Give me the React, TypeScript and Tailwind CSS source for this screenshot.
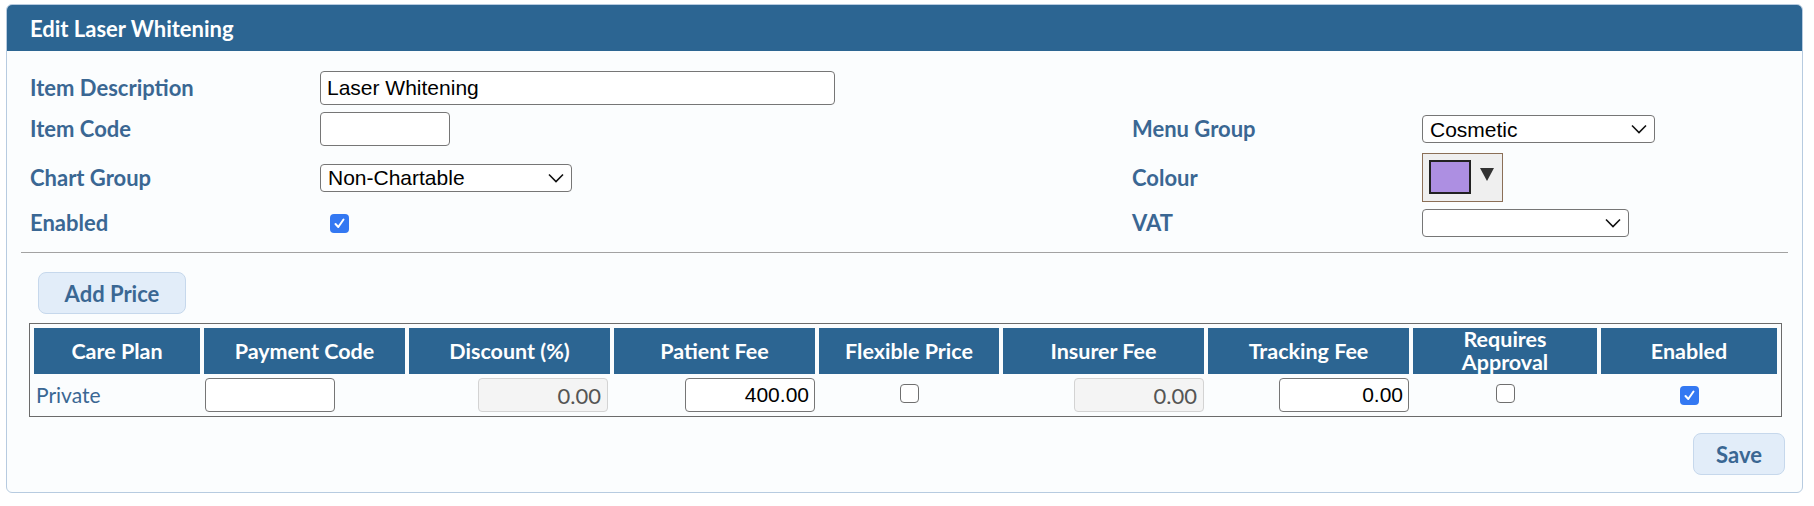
import * as React from 'react';

const LABEL = 'text-[22px] font-bold text-[#3a6793] leading-none';
const FIELD_FONT = "font-['Liberation_Sans',Arial,sans-serif] text-[21px] text-black";

function Chevron() {
  return (
    <svg width="16" height="10" viewBox="0 0 16 10" className="pointer-events-none absolute right-[8px] top-1/2 -translate-y-1/2">
      <polyline points="1,1.5 8,8.5 15,1.5" fill="none" stroke="#111" strokeWidth="1.6" />
    </svg>
  );
}

function Select({ value, width }: { value: string; width: string }) {
  return (
    <div className={`relative h-[28px] ${width}`}>
      <select
        defaultValue={value}
        className={`h-full w-full appearance-none rounded-[4px] border border-[#767676] bg-white pl-[7px] pr-8 leading-none ${FIELD_FONT}`}
      >
        <option value={value}>{value}</option>
      </select>
      <Chevron />
    </div>
  );
}

function Checkbox({ checked }: { checked?: boolean }) {
  if (checked) {
    return (
      <span className="inline-flex h-[19px] w-[19px] items-center justify-center rounded-[4px] bg-[#3378f2]">
        <svg width="13" height="13" viewBox="0 0 13 13">
          <polyline points="2.5,7 5.3,10 10.5,2.5" fill="none" stroke="#fff" strokeWidth="2" strokeLinecap="round" strokeLinejoin="round" />
        </svg>
      </span>
    );
  }
  return <span className="inline-block h-[19px] w-[19px] rounded-[4px] border border-[#6f6f6f] bg-white" />;
}

function MoneyInput({ value, disabled }: { value: string; disabled?: boolean }) {
  return (
    <input
      readOnly
      value={value}
      disabled={disabled}
      className={
        disabled
          ? 'h-[34px] w-[130px] rounded-[4px] border border-[#d3d3d3] bg-[#f4f4f4] pr-[6px] text-right text-[22px] text-[#555]'
          : `h-[34px] w-[130px] rounded-[4px] border border-[#767676] bg-white pr-[5px] text-right ${FIELD_FONT}`
      }
    />
  );
}

const columns = [
  { label: 'Care Plan', w: 'w-[166px]' },
  { label: 'Payment Code', w: 'w-[201px]' },
  { label: 'Discount (%)', w: 'w-[201px]' },
  { label: 'Patient Fee', w: 'w-[201px]' },
  { label: 'Flexible Price', w: 'w-[180px]' },
  { label: 'Insurer Fee', w: 'w-[201px]' },
  { label: 'Tracking Fee', w: 'w-[201px]' },
  { label: 'Requires Approval', w: 'w-[184px]' },
  { label: 'Enabled', w: 'w-[176px]' },
];

export default function App() {
  return (
    <div className="min-h-[506px] bg-white pl-[6px] pr-[11px] pt-[4px] font-[Lato,sans-serif]">
      <div className="overflow-hidden rounded-[6px] border border-[#b7cbe0] bg-[#fbfdfe]">
        <div className="flex h-[46px] items-center bg-[#2c6592] pl-[23px]">
          <h1 className="text-[22px] font-bold text-white">Edit Laser Whitening</h1>
        </div>

        <div className="px-[14px] pt-[20px] pb-[17px]">
          <div className="grid grid-cols-[290px_812px_290px_1fr] items-center gap-y-[7px] pl-[9px]">
            {/* row 1 */}
            <div className={LABEL}>Item Description</div>
            <div className="col-span-3">
              <input
                readOnly
                value="Laser Whitening"
                className={`h-[34px] w-[515px] rounded-[4px] border border-[#767676] bg-white px-[6px] ${FIELD_FONT}`}
              />
            </div>

            {/* row 2 */}
            <div className={LABEL}>Item Code</div>
            <div>
              <input readOnly className="h-[34px] w-[130px] rounded-[4px] border border-[#767676] bg-white" />
            </div>
            <div className={LABEL}>Menu Group</div>
            <Select value="Cosmetic" width="w-[233px]" />

            {/* row 3 */}
            <div className={LABEL}>Chart Group</div>
            <Select value="Non-Chartable" width="w-[252px]" />
            <div className={LABEL}>Colour</div>
            <div className="flex h-[49px] w-[81px] items-start border border-[#8b6f57] bg-[#efefef] pl-[6px] pt-[6px]">
              <span className="h-[34px] w-[42px] border-2 border-[#222] bg-[#ad8fe2]" />
              <svg width="14" height="13" viewBox="0 0 14 13" className="ml-[9px] mt-[8px]">
                <polygon points="0,0 14,0 7,13" fill="#333" />
              </svg>
            </div>

            {/* row 4 */}
            <div className={LABEL}>Enabled</div>
            <div className="flex pl-[10px]">
              <Checkbox checked />
            </div>
            <div className={LABEL}>VAT</div>
            <Select value="" width="w-[207px]" />
          </div>

          <div className="mt-[15px] border-t border-[#a2a2a2]" />

          <button className="ml-[17px] mt-[19px] h-[42px] w-[148px] rounded-[8px] border border-[#c6d8ec] bg-[#e2edf9] text-[22px] font-bold text-[#3a6793]">
            Add Price
          </button>

          <table className="ml-[8px] mt-[9px] w-[1753px] table-fixed border-separate border-spacing-[4px] border border-[#6b6b6b]">
            <thead>
              <tr>
                {columns.map((c) => (
                  <th
                    key={c.label}
                    className={`${c.w} h-[46px] bg-[#2c6592] px-2 text-center text-[21.5px] font-bold leading-[23px] text-white`}
                  >
                    {c.label === 'Requires Approval' ? (
                      <>
                        Requires
                        <br />
                        Approval
                      </>
                    ) : (
                      c.label
                    )}
                  </th>
                ))}
              </tr>
            </thead>
            <tbody>
              <tr className="h-[34px]">
                <td className="p-0 pl-[2px] text-[21px] text-[#3a6793]">Private</td>
                <td className="p-0 pl-[1px]">
                  <input readOnly className="block h-[34px] w-[130px] rounded-[4px] border border-[#767676] bg-white" />
                </td>
                <td className="p-0 pr-[2px] text-right">
                  <MoneyInput value="0.00" disabled />
                </td>
                <td className="p-0 text-right">
                  <MoneyInput value="400.00" />
                </td>
                <td className="p-0 text-center align-middle">
                  <span className="inline-flex pt-[3px]">
                    <Checkbox />
                  </span>
                </td>
                <td className="p-0 text-right">
                  <MoneyInput value="0.00" disabled />
                </td>
                <td className="p-0 text-right">
                  <MoneyInput value="0.00" />
                </td>
                <td className="p-0 text-center">
                  <span className="inline-flex pt-[3px]">
                    <Checkbox />
                  </span>
                </td>
                <td className="p-0 text-center">
                  <span className="inline-flex pt-[3px]">
                    <Checkbox checked />
                  </span>
                </td>
              </tr>
            </tbody>
          </table>

          <div className="mt-[16px] flex justify-end pr-[3px]">
            <button className="h-[42px] w-[92px] rounded-[8px] border border-[#c6d8ec] bg-[#e2edf9] text-[22px] font-bold text-[#3a6793]">
              Save
            </button>
          </div>
        </div>
      </div>
    </div>
  );
}
